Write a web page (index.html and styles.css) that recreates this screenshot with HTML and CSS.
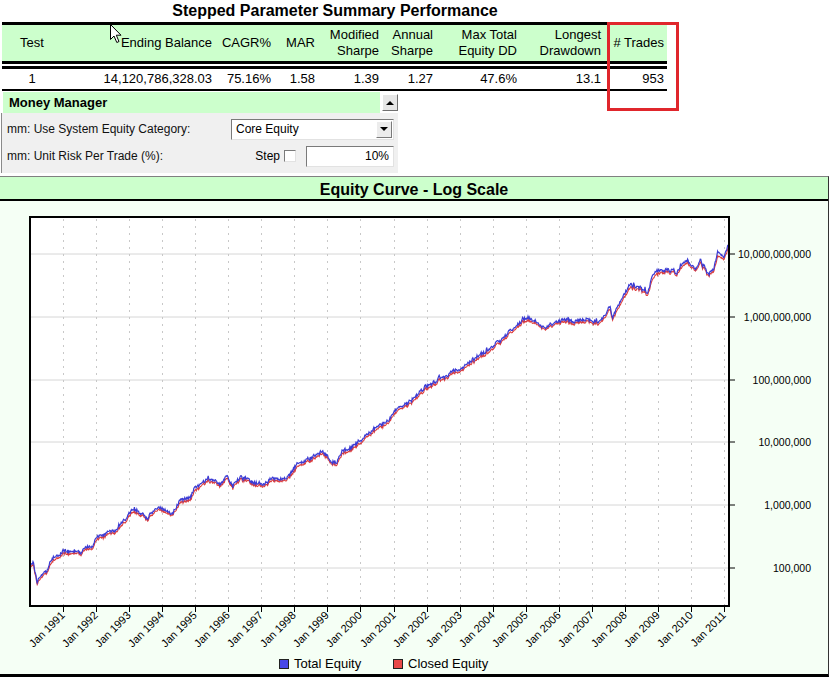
FILE: index.html
```html
<!DOCTYPE html>
<html lang="en">
<head>
    <meta charset="UTF-8">
    <title>Stepped Parameter Summary Performance</title>
    <link rel="stylesheet" href="styles.css">
</head>
<body>
    <div class="page">
        <!-- Summary table -->
        <div class="summary">
            <h1 class="summary-title">Stepped Parameter Summary Performance</h1>
            <table class="results">
                <colgroup>
                    <col style="width: 60px">
                    <col style="width: 153px">
                    <col style="width: 59px">
                    <col style="width: 44px">
                    <col style="width: 64px">
                    <col style="width: 54px">
                    <col style="width: 84px">
                    <col style="width: 84px">
                    <col style="width: 63px">
                </colgroup>
                <thead>
                    <tr>
                        <th class="test">Test</th>
                        <th>Ending Balance</th>
                        <th>CAGR%</th>
                        <th>MAR</th>
                        <th>Modified Sharpe</th>
                        <th>Annual Sharpe</th>
                        <th>Max Total Equity DD</th>
                        <th>Longest Drawdown</th>
                        <th># Trades</th>
                    </tr>
                </thead>
                <tbody>
                    <tr>
                        <td class="test">1</td>
                        <td>14,120,786,328.03</td>
                        <td>75.16%</td>
                        <td>1.58</td>
                        <td>1.39</td>
                        <td>1.27</td>
                        <td>47.6%</td>
                        <td>13.1</td>
                        <td>953</td>
                    </tr>
                </tbody>
            </table>
        </div>

        <!-- Money manager panel -->
        <div class="mm-panel">
            <div class="mm-header">
                <div class="mm-title">Money Manager</div>
                <div class="mm-toggle"><span class="arrow-up"></span></div>
            </div>
            <div class="mm-body">
                <div class="mm-label">mm: Use System Equity Category:</div>
                <div class="mm-select">
                    <span>Core Equity</span>
                    <span class="select-btn"><span class="arrow-down"></span></span>
                </div>
                <div class="mm-label">mm: Unit Risk Per Trade (%):</div>
                <div class="mm-step">
                    <span>Step</span>
                    <span class="checkbox"></span>
                    <span class="mm-input">10%</span>
                </div>
            </div>
        </div>

        <!-- Equity chart -->
        <div class="chart-panel">
            <div class="chart-header">Equity Curve - Log Scale</div>
            <svg id="chart" class="chart" width="828" height="473" viewBox="0 201 828 473">
                <defs>
                    <clipPath id="plot-clip">
                        <rect x="31" y="218" width="697" height="387"></rect>
                    </clipPath>
                </defs>
                <rect class="plot-bg" x="30" y="217" width="699" height="389"></rect>
                <g class="h-grid">
                    <line x1="31" y1="254" x2="728" y2="254"></line>
                    <line x1="31" y1="317" x2="728" y2="317"></line>
                    <line x1="31" y1="380" x2="728" y2="380"></line>
                    <line x1="31" y1="442" x2="728" y2="442"></line>
                    <line x1="31" y1="505" x2="728" y2="505"></line>
                    <line x1="31" y1="568" x2="728" y2="568"></line>
                </g>
                <g id="year-grid" class="v-grid"></g>
                <g class="ticks">
                    <line x1="730" y1="254" x2="735" y2="254"></line>
                    <line x1="730" y1="317" x2="735" y2="317"></line>
                    <line x1="730" y1="380" x2="735" y2="380"></line>
                    <line x1="730" y1="442" x2="735" y2="442"></line>
                    <line x1="730" y1="505" x2="735" y2="505"></line>
                    <line x1="730" y1="568" x2="735" y2="568"></line>
                </g>
                <g id="year-ticks" class="ticks"></g>
                <g clip-path="url(#plot-clip)">
                    <polyline id="closed-line" class="closed-line" points=""></polyline>
                    <polyline id="total-line" class="total-line" points=""></polyline>
                </g>
                <rect class="plot-frame" x="30" y="217" width="699" height="389"></rect>
                <g class="y-labels">
                    <text x="811" y="258">10,000,000,000</text>
                    <text x="811" y="321">1,000,000,000</text>
                    <text x="811" y="384">100,000,000</text>
                    <text x="811" y="446">10,000,000</text>
                    <text x="811" y="509">1,000,000</text>
                    <text x="811" y="572">100,000</text>
                </g>
                <g id="year-labels" class="x-labels"></g>
                <g class="legend">
                    <rect class="swatch-total" x="279.5" y="659.5" width="9" height="9"></rect>
                    <text x="294" y="668">Total Equity</text>
                    <rect class="swatch-closed" x="393.5" y="659.5" width="9" height="9"></rect>
                    <text x="408" y="668">Closed Equity</text>
                </g>
            </svg>
        </div>

        <div class="highlight"></div>
        <svg class="cursor" width="13" height="20" viewBox="0 0 13 20">
            <path d="M0.5 0.5 L0.5 15.5 L4 12 L6.8 18.5 L9 17.5 L6.3 11.2 L11 11.2 Z"></path>
        </svg>
    </div>

    <script src="script.js"></script>
</body>
</html>
```

FILE: styles.css
```css
/* General */
* {
    margin: 0;
    padding: 0;
    box-sizing: border-box;
}

body {
    background-color: #fff;
    color: #000;
    font-family: 'Liberation Sans', Arial, sans-serif;
}

.page {
    position: relative;
    width: 838px;
    height: 683px;
}

/* Summary table */
.summary {
    width: 665px;
    margin-left: 2px;
}

.summary-title {
    font-size: 16px;
    font-weight: bold;
    line-height: 22px;
    text-align: center;
    margin-left: 1px;
}

.results {
    width: 665px;
    table-layout: fixed;
    border-collapse: separate;
    border-spacing: 0;
    font-size: 13px;
}

.results th {
    font-weight: normal;
    line-height: 16px;
    padding: 2px 3px;
    text-align: right;
    vertical-align: middle;
    background-color: #ccffcc;
    background-clip: padding-box;
    border-top: 3px solid #000;
    border-bottom: 8px double #000;
}

.results td {
    line-height: 16px;
    padding: 2px 3px;
    text-align: right;
    border-bottom: 2px solid #000;
}

.results .test {
    text-align: center;
}

/* Money manager */
.mm-panel {
    width: 397px;
    margin-top: 1px;
    margin-left: 1px;
    font-size: 12px;
}

.mm-header {
    display: flex;
    align-items: center;
    height: 21px;
    padding-left: 2px;
}

.mm-title {
    flex: 1;
    height: 21px;
    line-height: 21px;
    padding-left: 6px;
    background-color: #ccffcc;
    font-size: 13px;
    font-weight: bold;
}

.mm-toggle {
    width: 16px;
    height: 17px;
    margin-left: 2px;
    background-color: #e6e6e6;
    border: 1px solid;
    border-color: #fff #707070 #707070 #fff;
    display: flex;
    align-items: center;
    justify-content: center;
}

.arrow-up {
    border-left: 4px solid transparent;
    border-right: 4px solid transparent;
    border-bottom: 4px solid #000;
}

.arrow-down {
    border-left: 4px solid transparent;
    border-right: 4px solid transparent;
    border-top: 4px solid #000;
}

.mm-body {
    display: grid;
    grid-template-columns: 1fr 163px;
    row-gap: 5px;
    align-items: center;
    height: 60px;
    padding: 5px 4px 6px 5px;
    background-color: #f0f0f0;
    border-left: 1px solid #8a8a8a;
}

.mm-label {
    color: #111;
}

.mm-select {
    display: flex;
    align-items: center;
    justify-content: space-between;
    height: 21px;
    padding: 1px 1px 1px 4px;
    background-color: #fff;
    border: 1px solid;
    border-color: #7a7a7a #e2e2e2 #e2e2e2 #7a7a7a;
}

.select-btn {
    width: 16px;
    height: 17px;
    background-color: #ececec;
    border: 1px solid;
    border-color: #fff #7a7a7a #7a7a7a #fff;
    display: flex;
    align-items: center;
    justify-content: center;
}

.mm-step {
    display: flex;
    align-items: center;
    justify-content: flex-end;
}

.checkbox {
    width: 12px;
    height: 12px;
    margin-left: 4px;
    margin-right: 10px;
    background-color: #fff;
    border: 1px solid;
    border-color: #7a7a7a #e2e2e2 #e2e2e2 #7a7a7a;
}

.mm-input {
    width: 88px;
    height: 21px;
    line-height: 19px;
    padding-right: 4px;
    text-align: right;
    background-color: #fff;
    border: 1px solid;
    border-color: #7a7a7a #e2e2e2 #e2e2e2 #7a7a7a;
}

/* Chart */
.chart-panel {
    width: 829px;
    margin-top: 3px;
    border-top: 1px solid #808080;
    border-right: 1px solid #333;
    border-bottom: 3px solid #000;
    background-color: #f5fff5;
}

.chart-header {
    height: 24px;
    line-height: 23px;
    padding-top: 1px;
    text-align: center;
    font-size: 16px;
    font-weight: bold;
    background-color: #ccffcc;
    border-bottom: 2px solid #000;
}

.chart {
    display: block;
    font-family: 'Liberation Sans', Arial, sans-serif;
}

.plot-bg {
    fill: #fff;
}

.plot-frame {
    fill: none;
    stroke: #000;
    stroke-width: 2;
}

.h-grid line {
    stroke: #d6d6d6;
    stroke-width: 1;
}

.v-grid line {
    stroke: #c8c8c8;
    stroke-width: 1;
    stroke-dasharray: 2 5;
}

.ticks line {
    stroke: #000;
    stroke-width: 1;
}

.y-labels text {
    font-size: 10.5px;
    text-anchor: end;
}

.x-labels text {
    font-size: 11px;
    text-anchor: end;
}

.closed-line {
    fill: none;
    stroke: #dc3c3c;
    stroke-width: 1.1;
}

.total-line {
    fill: none;
    stroke: #3b3bd4;
    stroke-width: 1.2;
}

.legend text {
    font-size: 13px;
}

.swatch-total {
    fill: #4848e8;
    stroke: #222;
}

.swatch-closed {
    fill: #e84848;
    stroke: #222;
}

/* Overlays */
.highlight {
    position: absolute;
    left: 607px;
    top: 22px;
    width: 72px;
    height: 89px;
    border: 3px solid #e0262c;
}

.cursor {
    position: absolute;
    left: 110px;
    top: 24px;
}

.cursor path {
    fill: #fff;
    stroke: #000;
    stroke-width: 1;
}
```

FILE: script.js
```js
// Equity chart: year grid, labels and the two curves
const NS = 'http://www.w3.org/2000/svg';

function el(tag, attrs, text) {
    const node = document.createElementNS(NS, tag);
    for (const k in attrs) node.setAttribute(k, attrs[k]);
    if (text) node.textContent = text;
    return node;
}

const grid = document.getElementById('year-grid');
const ticks = document.getElementById('year-ticks');
const labels = document.getElementById('year-labels');

for (let year = 1991; year <= 2011; year++) {
    const x = Math.round(63 + (year - 1991) * 33.05) + 0.5;
    grid.appendChild(el('line', { x1: x, y1: 219, x2: x, y2: 605 }));
    ticks.appendChild(el('line', { x1: x, y1: 607, x2: x, y2: 612 }));
    const lx = x + 2, ly = 616;
    labels.appendChild(el('text', { x: lx, y: ly, transform: `rotate(-45 ${lx} ${ly})` }, 'Jan ' + year));
}

// rough path of total equity, in pixel coords
const path = [
    [30,567],[33,563],[37,580],[43,575],[48,568],[53,557],[58,556],[63,552],[70,551],[80,553],
    [87,549],[93,547],[97,535],[103,536],[110,533],[115,530],[120,525],[125,520],[130,513],[137,510],
    [142,513],[147,515],[152,508],[160,508],[166,512],[172,517],[177,507],[180,500],[190,497],[193,490],
    [200,486],[208,480],[215,482],[220,485],[228,477],[233,487],[240,475],[247,478],[253,482],[263,482],
    [268,478],[273,475],[280,477],[287,477],[290,475],[297,465],[307,460],[317,455],[322,453],[327,455],
    [333,460],[337,462],[342,452],[348,450],[355,444],[362,440],[368,433],[375,428],[382,424],[388,418],
    [395,410],[402,405],[410,400],[418,393],[425,388],[432,384],[440,378],[447,376],[455,370],[462,366],
    [470,361],[477,357],[484,352],[490,348],[497,342],[503,337],[510,330],[516,326],[522,320],[528,317],
    [533,322],[540,325],[546,327],[552,324],[558,322],[565,319],[572,320],[580,318],[588,319],[595,318],
    [600,320],[605,316],[610,307],[613,318],[620,302],[625,294],[630,283],[635,286],[640,284],[647,292],
    [653,272],[660,270],[668,270],[677,270],[683,265],[688,259],[695,268],[700,261],[707,272],[710,274],
    [714,268],[718,253],[724,257],[728,246]
];

function baseAt(x) {
    for (let i = 1; i < path.length; i++) {
        if (x <= path[i][0]) {
            const [x0, y0] = path[i - 1];
            const [x1, y1] = path[i];
            return y0 + (y1 - y0) * (x - x0) / (x1 - x0);
        }
    }
    return path[path.length - 1][1];
}

let seed = 12345;
function rand() {
    seed = (seed * 16807) % 2147483647;
    return (seed - 1) / 2147483646;
}

const total = [];
const closed = [];
let slow = 0;
let fast = 0;
let lag = 0;
let prev = null;
for (let x = 30; x <= 729; x += 0.6) {
    slow = slow * 0.93 + (rand() - 0.5) * 1.6;
    fast = fast * 0.35 + (rand() - 0.5) * 3.2;
    if (rand() < 0.03) fast -= 3 * rand();
    const y = baseAt(x) + slow + fast;
    // closed equity trails behind when open profit builds up
    if (prev !== null && y < prev - 1) lag = Math.min(lag + (prev - y) * 0.25, 4);
    lag = lag * 0.88;
    prev = y;
    total.push(x.toFixed(1) + ',' + y.toFixed(1));
    closed.push(x.toFixed(1) + ',' + (y + lag + 1.3).toFixed(1));
}

document.getElementById('total-line').setAttribute('points', total.join(' '));
document.getElementById('closed-line').setAttribute('points', closed.join(' '));
```
